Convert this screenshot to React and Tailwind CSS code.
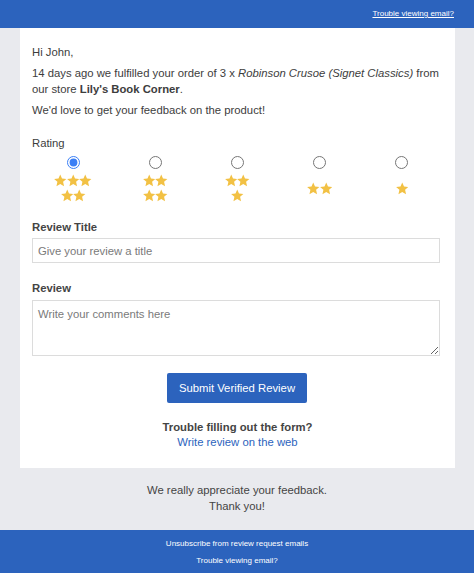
import React from "react";

const cols = [
  [3, 2],
  [2, 2],
  [2, 1],
  [2],
  [1],
];

function Star() {
  return (
    <svg width="12.5" height="13" viewBox="1 1 22 22" className="block">
      <path
        d="M12 1.5l3.1 7.1 7.7.7-5.8 5.1 1.7 7.6L12 18l-6.7 4 1.7-7.6L1.2 9.3l7.7-.7z"
        fill="#f2c144"
      />
    </svg>
  );
}

function Stars({ rows }) {
  return (
    <div className="flex flex-col items-center justify-center h-[32px] mt-[3px] gap-[2px]">
      {rows.map((n, i) => (
        <div key={i} className="flex">
          {Array.from({ length: n }).map((_, j) => (
            <Star key={j} />
          ))}
        </div>
      ))}
    </div>
  );
}

export default function App() {
  return (
    <div className="w-[474px] min-h-[573px] bg-[#e9eaee] [font-family:'Liberation_Sans',Arial,sans-serif] text-[#3d3d3d]">
      <div className="h-[28px] bg-[#2c63bd] flex items-center justify-end pr-[20px]">
        <a className="text-white text-[8px] underline leading-none">Trouble viewing email?</a>
      </div>
      <div className="ml-[20px] w-[435px] bg-white pt-[16px] pb-[18px] pl-[12px] pr-[12px] text-[11.3px] leading-[16px]">
        <p>Hi John,</p>
        <p className="mt-[5px]">
          14 days ago we fulfilled your order of 3 x <i>Robinson Crusoe (Signet Classics)</i> from our store <b>Lily's Book Corner</b>.
        </p>
        <p className="mt-[5px]">We'd love to get your feedback on the product!</p>
        <div className="mt-[17px]">Rating</div>
        <div className="grid grid-cols-5 mt-[5px]">
          {cols.map((rows, i) => (
            <div key={i} className="flex flex-col items-center">
              <input
                type="radio"
                name="rating"
                defaultChecked={i === 0}
                className="m-0 w-[13px] h-[13px] accent-[#3b7ff5]"
              />
              <Stars rows={rows} />
            </div>
          ))}
        </div>
        <div className="mt-[15px] font-bold text-[#444]">Review Title</div>
        <input
          type="text"
          placeholder="Give your review a title"
          className="mt-[3px] block w-[408px] h-[25px] border border-[#dcdcdc] px-[5px] text-[11.3px] placeholder:text-[#7a7a7a] outline-none"
        />
        <div className="mt-[17px] font-bold text-[#444]">Review</div>
        <textarea
          placeholder="Write your comments here"
          className="mt-[4px] block w-[408px] h-[56px] border border-[#dcdcdc] px-[5px] py-[5px] text-[11.3px] leading-[16px] placeholder:text-[#7a7a7a] outline-none"
        />
        <div className="flex justify-center mt-[17px]">
          <button className="w-[140px] h-[30px] bg-[#2c63bd] text-white text-[11.3px] rounded-[2px] -ml-[1px]">
            Submit Verified Review
          </button>
        </div>
        <div className="text-center mt-[17px] font-bold text-[#444] leading-[15px]">Trouble filling out the form?</div>
        <div className="text-center text-[#2c63bd] leading-[15px]">Write review on the web</div>
      </div>
      <div className="text-center text-[11.3px] leading-[16px] text-[#444] pt-[14px] h-[62px]">
        <div>We really appreciate your feedback.</div>
        <div>Thank you!</div>
      </div>
      <div className="bg-[#2c63bd] h-[44px] flex flex-col items-center text-white text-[8px] pt-[10px] gap-[9px] leading-[8px]">
        <a>Unsubscribe from review request emails</a>
        <a>Trouble viewing email?</a>
      </div>
    </div>
  );
}
